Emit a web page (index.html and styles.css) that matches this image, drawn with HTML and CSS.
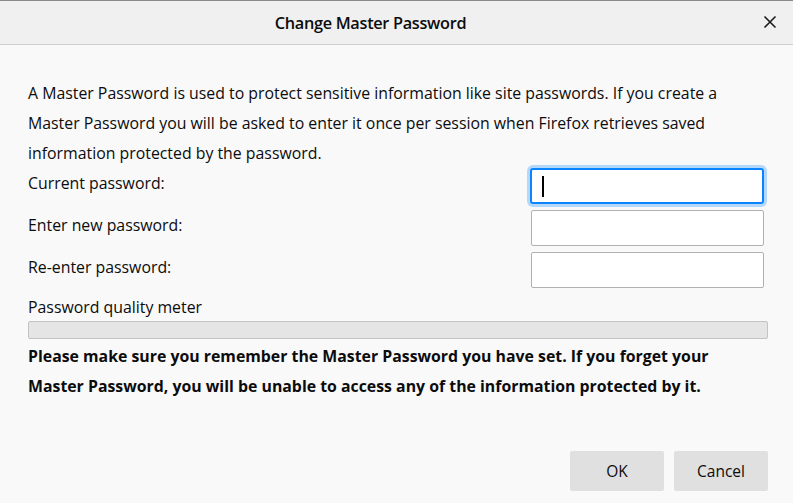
FILE: index.html
```html
<!DOCTYPE html>
<html>
<head>
<meta charset="utf-8">
<link rel="stylesheet" href="styles.css">
</head>
<body>
<div class="dialog">
  <div class="titlebar">
    <div class="title">Change Master Password</div>
    <div class="close">
      <svg width="14" height="14" viewBox="0 0 14 14"><path d="M1.5 1.5 L12.5 12.5 M12.5 1.5 L1.5 12.5" stroke="#1a1a1a" stroke-width="1.6" fill="none"/></svg>
    </div>
  </div>
  <div class="content">
    <p class="intro">A Master Password is used to protect sensitive information like site passwords. If you create a Master Password you will be asked to enter it once per session when Firefox retrieves saved information protected by the password.</p>
    <div class="fields">
      <label class="lbl">Current password:</label>
      <div class="input focused"><span class="caret"></span></div>
      <label class="lbl">Enter new password:</label>
      <div class="input"></div>
      <label class="lbl">Re-enter password:</label>
      <div class="input"></div>
    </div>
    <div class="meter-label">Password quality meter</div>
    <div class="meter"></div>
    <p class="warning">Please make sure you remember the Master Password you have set. If you forget your Master Password, you will be unable to access any of the information protected by it.</p>
    <div class="buttons">
      <div class="btn">OK</div>
      <div class="btn">Cancel</div>
    </div>
  </div>
</div>
</body>
</html>
```
FILE: styles.css
```css
html, body {
  margin: 0;
  padding: 0;
  background: #f9f9f9;
  width: 793px;
  height: 503px;
  overflow: hidden;
}
.dialog {
  font-family: "Open Sans", "Noto Sans", sans-serif;
  color: #0c0c0d;
}
.titlebar {
  height: 43px;
  border-top: 1px solid #8a8a8a;
  border-bottom: 1px solid #cfcfcf;
  background: #f0f0f0;
  display: flex;
  align-items: center;
  justify-content: center;
  position: relative;
}
.title {
  font-size: 16.3px;
  font-weight: 600;
  letter-spacing: -0.3px;
  margin-left: -52px;
  margin-top: 1px;
}
.close {
  position: absolute;
  right: 16px;
  top: 14px;
  width: 14px;
  height: 14px;
}
.close svg { display: block; }
.content {
  padding: 33px 25px 0 28px;
}
.intro {
  margin: 0;
  max-width: 700px;
  font-size: 15.85px;
  line-height: 30px;
}
.fields {
  display: grid;
  grid-template-columns: 1fr 233px;
  row-gap: 6px;
  padding-right: 4px;
}
.lbl {
  font-size: 15.85px;
  line-height: 30px;
}
.input {
  height: 34px;
  border: 1px solid #b1b1b1;
  border-radius: 2px;
  background: #fff;
  position: relative;
}
.input.focused {
  border: 2px solid #0a84ff;
  height: 32px;
  margin: 0 0 0 -1px;
  box-shadow: 0 0 0 3px #b4d8fc;
  border-radius: 3px;
}
.caret {
  position: absolute;
  left: 10px;
  top: 6px;
  width: 1.5px;
  height: 21px;
  background: #000;
}
.meter-label {
  margin-top: 7px;
  font-size: 15.85px;
  line-height: 24px;
}
.meter {
  margin-top: 2px;
  height: 16px;
  background: #e5e5e5;
  border: 1px solid #c4c4c4;
  border-radius: 2px;
}
.warning {
  margin: 2px 0 0 0;
  max-width: 690px;
  font-size: 15.85px;
  font-weight: 700;
  line-height: 30px;
}
.buttons {
  display: flex;
  justify-content: flex-end;
  gap: 10px;
  margin-top: 50px;
}
.btn {
  width: 94px;
  height: 40px;
  background: #e0e0e0;
  border-radius: 2px;
  display: flex;
  align-items: center;
  justify-content: center;
  font-size: 15.5px;
}
```
